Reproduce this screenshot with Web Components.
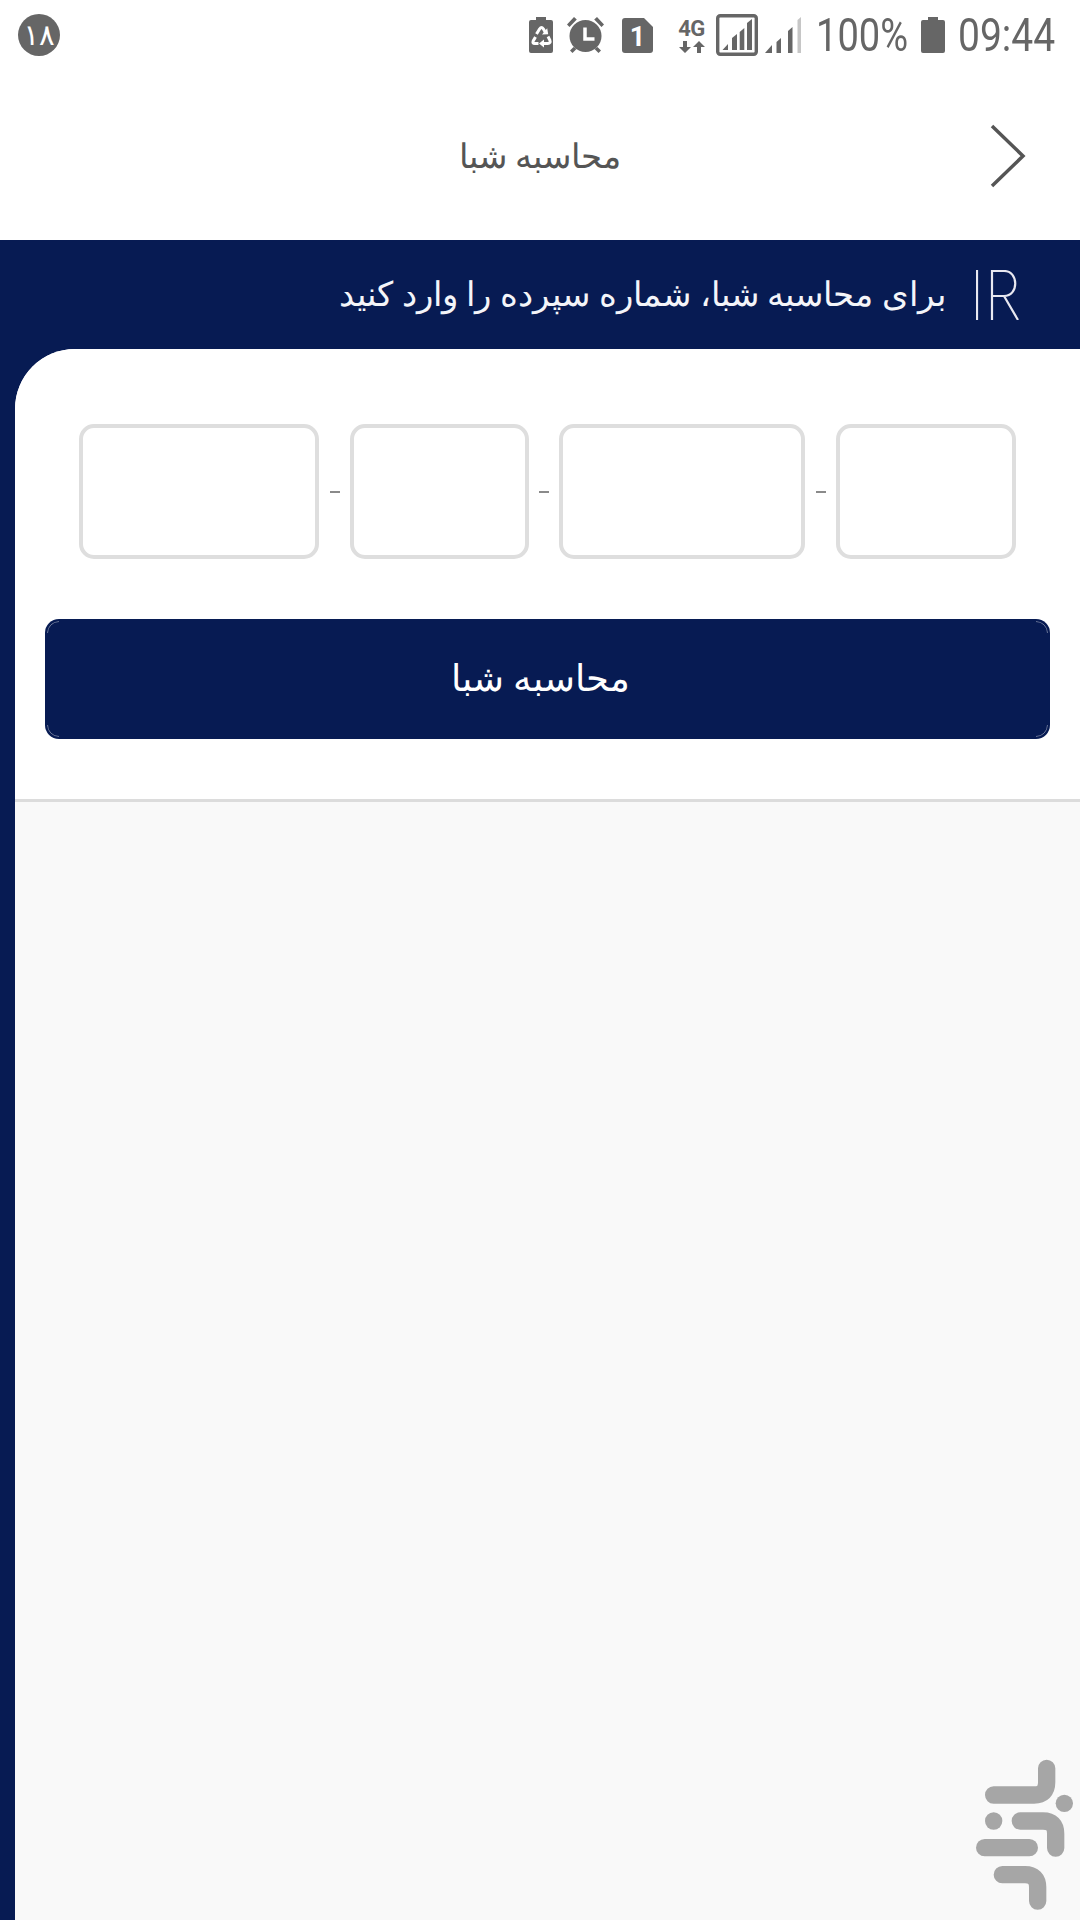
<!DOCTYPE html>
<html lang="fa">
<head>
<meta charset="utf-8">
<title>محاسبه شبا</title>
<style>
  html, body { margin: 0; padding: 0; }
  body { width: 1080px; height: 1920px; overflow: hidden; background: #fff; font-family: "Noto Sans", "DejaVu Sans", sans-serif; }
</style>
</head>
<body>
<sheba-app></sheba-app>
<script>
class StatusBar extends HTMLElement {
  connectedCallback() {
    this.attachShadow({ mode: 'open' });
    this.shadowRoot.innerHTML = `
      <style>
        :host { display: flex; align-items: center; height: 70px; background: #fff; color: #666; font-family: Roboto, sans-serif; }
        .badge { width: 42px; height: 42px; margin-left: 18px; border-radius: 50%; background: #666; color: #fff; display: flex; align-items: center; justify-content: center; font: 29px "DejaVu Sans", sans-serif; }
        .icons { margin-left: auto; display: flex; align-items: center; padding-right: 25px; }
        svg { display: block; flex: none; }
        .txt { display: block; height: 48px; line-height: 48px; font-size: 47px; white-space: nowrap; transform-origin: left center; }
        .box { display: block; }
        .net { display: flex; flex-direction: column; align-items: center; width: 29px; margin-left: 24px; padding-top: 1px; }
        .net span { display: block; height: 20px; line-height: 20px; font-size: 22px; font-weight: 700; letter-spacing: -.5px; white-space: nowrap; }
        .net svg { margin-top: 2px; }
        .sim { position: relative; width: 31px; height: 35px; margin-left: 18px; }
        .sim span { position: absolute; left: 0; right: 0; top: 3px; text-align: center; line-height: 32px; font-size: 27px; font-weight: 700; color: #fff; }
      </style>
      <div class="badge">۱۸</div>
      <div class="icons">
        <svg width="24" height="36" viewBox="0 0 24 36" fill="#666">
          <path d="M7 0h10v3h5a2 2 0 0 1 2 2v29a2 2 0 0 1-2 2H2a2 2 0 0 1-2-2V5a2 2 0 0 1 2-2h5z"/>
          <g fill="none" stroke="#fff" stroke-width="3">
            <path d="M7.500 17l3.200-5.200q1.800-2.400 3.600 0l2 3.400"/>
            <path d="M6.500 20l-2.300 4q-1 2.500 1.600 2.500h3.700"/>
            <path d="M19 19.500l1.800 3.500q1.200 3.500-2 3.500H14"/>
          </g>
          <path fill="#fff" d="M13 17.500l6.200-.3-1-6zM15 22.500v8l-5-4z"/>
        </svg>
        <svg style="margin-left:14px" width="37" height="36" viewBox="0 0 37 36" fill="#666">
          <circle cx="18.500" cy="19" r="16"/>
          <path d="M0 7.500L7 0l2.800 2.500L2.500 10zM37 7.500L30 0l-2.800 2.500L34.500 10zM6.500 30l-3.500 3.500 2.500 2.500 4-4zM30.500 30l3.500 3.500-2.500 2.500-4-4z"/>
          <path fill="none" stroke="#fff" stroke-width="3.500" d="M18 10.500v11.500h9.500"/>
        </svg>
        <div class="sim">
          <svg width="31" height="35" viewBox="0 0 31 35"><path fill="#666" d="M3 0h19l9 9v23a3 3 0 0 1-3 3H3a3 3 0 0 1-3-3V3a3 3 0 0 1 3-3z"/></svg>
          <span>1</span>
        </div>
        <div class="net">
          <span>4G</span>
          <svg width="28" height="12" viewBox="0 0 28 12" fill="#666">
            <path d="M5 0h4v6h4L7 12 1 6h4zM19 12h4V6h4l-6-6-6 6h4z"/>
          </svg>
        </div>
        <svg style="margin-left:10px" width="42" height="42" viewBox="0 0 42 42">
          <rect x="1.700" y="1.700" width="38.600" height="38.600" rx="2.500" fill="none" stroke="#666" stroke-width="3.400"/>
          <path fill="#666" d="M6.500 36l5.500-6v6zM16 36V24l5-4v16zM23.700 36V18l4.600-4v22zM31 36V9l5-4v31z"/>
        </svg>
        <svg style="margin-left:7px" width="36" height="36" viewBox="0 0 36 36">
          <path fill="#666" d="M0 36l7-8v8zM11.500 36V25l4.500-4v15zM23 36V14l4.500-4v26z"/>
          <path fill="#c6c6c6" d="M32.500 36V3l3.500-3v36z"/>
        </svg>
        <span class="box" style="margin-left:15px;width:92px"><span class="txt" style="transform:scaleX(.81)">100%</span></span>
        <svg style="margin-left:13px" width="24" height="36" viewBox="0 0 24 36" fill="#666">
          <path d="M7 0h10v3h5a2 2 0 0 1 2 2v29a2 2 0 0 1-2 2H2a2 2 0 0 1-2-2V5a2 2 0 0 1 2-2h5z"/>
        </svg>
        <span class="box" style="margin-left:13px;width:97px"><span class="txt" style="transform:scaleX(.83)">09:44</span></span>
      </div>
    `;
  }
}

class AppHeader extends HTMLElement {
  connectedCallback() {
    this.attachShadow({ mode: 'open' });
    this.shadowRoot.innerHTML = `
      <style>
        :host { display: flex; align-items: center; justify-content: center; position: relative; height: 170px; background: #fff; color: #555; font: 300 34.300px "Noto Sans", "DejaVu Sans", sans-serif; }
        .title { margin-bottom: 2px; }
        svg { position: absolute; left: 989px; top: 53px; }
      </style>
      <div class="title" dir="rtl"><slot></slot></div>
      <svg width="38" height="66" viewBox="0 0 38 66" fill="none" stroke="#555" stroke-width="3.500"><path d="M3 3l31 30L3 63"/></svg>
    `;
  }
}

class InfoBanner extends HTMLElement {
  connectedCallback() {
    this.attachShadow({ mode: 'open' });
    this.shadowRoot.innerHTML = `
      <style>
        :host { display: flex; align-items: center; justify-content: flex-end; height: 109px; background: var(--navy); color: #f4f5f9; font: 300 33.500px "Noto Sans", "DejaVu Sans", sans-serif; }
        .msg { margin-right: 30px; padding-bottom: 4px; white-space: nowrap; }
        svg { display: block; margin-right: 60px; }
      </style>
      <div class="msg" dir="rtl"><slot></slot></div>
      <svg width="44" height="50" viewBox="0 0 44 50" fill="none" stroke="#e8e8f0" stroke-width="2.200">
        <path d="M1 0v50M16 50V1h12c15 0 15 25 0 25H16M28 26l14 24"/>
      </svg>
    `;
  }
}

class ShebaField extends HTMLElement {
  connectedCallback() {
    this.attachShadow({ mode: 'open' });
    const w = this.getAttribute('width');
    this.shadowRoot.innerHTML = `
      <style>
        :host { display: block; flex: none; width: ${w}px; height: 135px; }
        input { display: block; box-sizing: border-box; width: 100%; height: 100%; margin: 0; background: #fff; border: 4px solid #dedede; border-radius: 15px; outline: none; }
      </style>
      <input type="text" inputmode="numeric" aria-label="شماره سپرده">
    `;
  }
}

class ShebaDash extends HTMLElement {
  connectedCallback() {
    this.attachShadow({ mode: 'open' });
    this.shadowRoot.innerHTML = `
      <style>
        :host { display: flex; flex: none; align-items: center; justify-content: center; width: var(--w, 31px); height: 135px; }
        i { display: block; width: 10px; height: 2px; background: #8a8a8a; }
      </style>
      <i></i>
    `;
  }
}

class ShebaButton extends HTMLElement {
  connectedCallback() {
    this.attachShadow({ mode: 'open' });
    this.shadowRoot.innerHTML = `
      <style>
        :host { display: flex; align-items: center; justify-content: center; position: relative; width: 1005px; height: 120px; background: var(--navy); border-radius: 14px; color: #fff; font: 300 36.500px "Noto Sans", "DejaVu Sans", sans-serif; }
        :host::before {
          content: ""; position: absolute; inset: 2px; border: 1px solid rgba(255, 255, 255, .4); border-radius: 12px;
          -webkit-mask: linear-gradient(#000 0 0) 0 0/12px 12px no-repeat, linear-gradient(#000 0 0) 100% 0/12px 12px no-repeat, linear-gradient(#000 0 0) 0 100%/12px 12px no-repeat, linear-gradient(#000 0 0) 100% 100%/12px 12px no-repeat;
        }
        span { margin: 0 14px 4px 0; }
      </style>
      <span dir="rtl"><slot></slot></span>
    `;
  }
}

class ShebaCard extends HTMLElement {
  connectedCallback() {
    this.attachShadow({ mode: 'open' });
    this.shadowRoot.innerHTML = `
      <style>
        :host { display: block; flex: 1; background: var(--navy); padding-left: 15px; }
        .card { height: 100%; background: #f9f9f9; border-top-left-radius: 60px; overflow: hidden; }
        .form { background: #fff; height: 450px; border-bottom: 3px solid #dcdcdc; box-sizing: content-box; }
        .row { display: flex; padding: 75px 0 0 64px; }
        .action { padding: 60px 0 0 30px; }
      </style>
      <div class="card">
        <div class="form">
          <div class="row">
            <sheba-field width="240"></sheba-field>
            <sheba-dash></sheba-dash>
            <sheba-field width="179"></sheba-field>
            <sheba-dash style="--w:30px"></sheba-dash>
            <sheba-field width="246"></sheba-field>
            <sheba-dash></sheba-dash>
            <sheba-field width="180"></sheba-field>
          </div>
          <div class="action"><sheba-button>محاسبه شبا</sheba-button></div>
        </div>
      </div>
    `;
  }
}

class StoreMark extends HTMLElement {
  connectedCallback() {
    this.attachShadow({ mode: 'open' });
    this.shadowRoot.innerHTML = `
      <style>
        :host { display: block; position: absolute; left: 950px; top: 1740px; width: 130px; height: 180px; }
        svg { display: block; }
      </style>
      <svg width="130" height="180" viewBox="0 0 390 540" fill="none" stroke="#a6a6a6" stroke-width="52" stroke-linecap="round">
        <path d="M290 85v42q0 38-38 38H131"/>
        <path d="M211 243h68q38 0 38 38v43"/>
        <path d="M104 323h134"/>
        <path d="M157 404h68q38 0 38 38v41"/>
        <circle cx="343" cy="190" r="26" fill="#a6a6a6" stroke="none"/>
        <circle cx="131" cy="243" r="26" fill="#a6a6a6" stroke="none"/>
      </svg>
    `;
  }
}

class ShebaApp extends HTMLElement {
  connectedCallback() {
    this.attachShadow({ mode: 'open' });
    this.shadowRoot.innerHTML = `
      <style>
        :host { --navy: #071b53; display: flex; flex-direction: column; position: relative; width: 1080px; height: 1920px; }
      </style>
      <status-bar></status-bar>
      <app-header>محاسبه شبا</app-header>
      <info-banner>برای محاسبه شبا، شماره سپرده را وارد کنید</info-banner>
      <sheba-card></sheba-card>
      <store-mark></store-mark>
    `;
  }
}

customElements.define('status-bar', StatusBar);
customElements.define('app-header', AppHeader);
customElements.define('info-banner', InfoBanner);
customElements.define('sheba-field', ShebaField);
customElements.define('sheba-dash', ShebaDash);
customElements.define('sheba-button', ShebaButton);
customElements.define('sheba-card', ShebaCard);
customElements.define('store-mark', StoreMark);
customElements.define('sheba-app', ShebaApp);
</script>
</body>
</html>
